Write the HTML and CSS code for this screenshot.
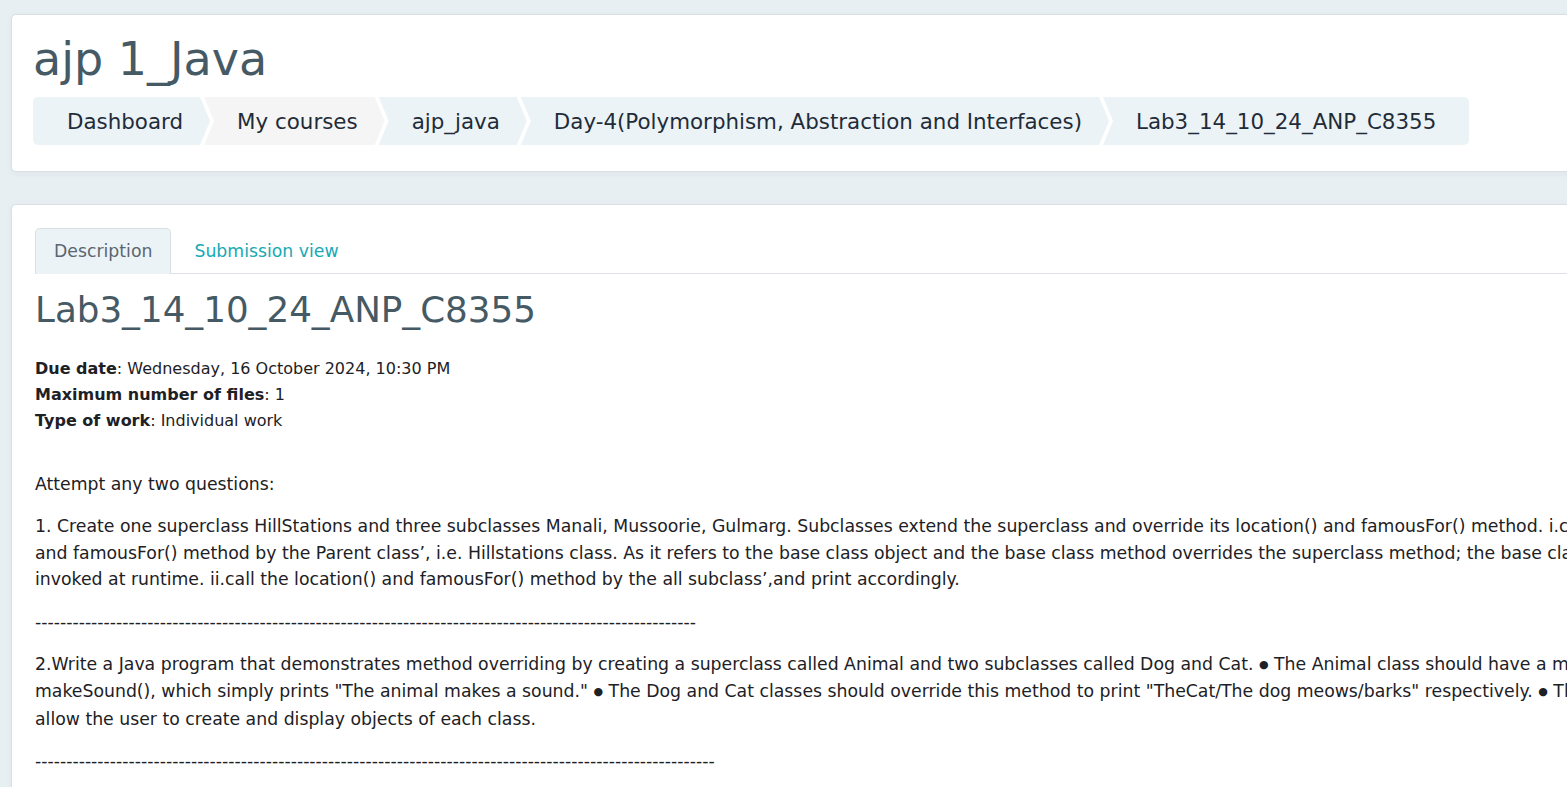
FILE: index.html
```html
<!DOCTYPE html>
<html lang="en">
<head>
<meta charset="utf-8">
<title>ajp 1_Java: Lab3_14_10_24_ANP_C8355</title>
<link rel="stylesheet" href="styles.css">
</head>
<body>
<div class="page">
  <header class="card header-card">
    <h1 class="course-title">ajp 1_Java</h1>
    <nav class="breadcrumb">
      <a class="crumb crumb-first" href="#">Dashboard</a>
      <a class="crumb crumb-hover" href="#">My courses</a>
      <a class="crumb" href="#">ajp_java</a>
      <a class="crumb" href="#">Day-4(Polymorphism, Abstraction and Interfaces)</a>
      <span class="crumb crumb-last">Lab3_14_10_24_ANP_C8355</span>
    </nav>
  </header>

  <main class="card content-card">
    <ul class="tabs">
      <li class="tab tab-active">Description</li>
      <li class="tab"><a class="tab-link" href="#">Submission view</a></li>
    </ul>
    <h2 class="activity-title">Lab3_14_10_24_ANP_C8355</h2>
    <div class="dates">
      <div><strong>Due date</strong>: Wednesday, 16 October 2024, 10:30 PM</div>
      <div><strong>Maximum number of files</strong>: 1</div>
      <div><strong>Type of work</strong>: Individual work</div>
    </div>
    <div class="intro">
      <p>Attempt any two questions:</p>
      <p class="lines">1. Create one superclass HillStations and three subclasses Manali, Mussoorie, Gulmarg. Subclasses extend the superclass and override its location() and famousFor() method. i.call the location()<br>and famousFor() method by the Parent class’, i.e. Hillstations class. As it refers to the base class object and the base class method overrides the superclass method; the base class method is<br>invoked at runtime. ii.call the location() and famousFor() method by the all subclass’,and print accordingly.</p>
      <p class="lines">----------------------------------------------------------------------------------------------------------</p>
      <p class="lines">2.Write a Java program that demonstrates method overriding by creating a superclass called Animal and two subclasses called Dog and Cat. <span class="bullet">●</span> The Animal class should have a method<br>makeSound(), which simply prints "The animal makes a sound." <span class="bullet">●</span> The Dog and Cat classes should override this method to print "TheCat/The dog meows/barks" respectively. <span class="bullet">●</span> The program should<br>allow the user to create and display objects of each class.</p>
      <p class="lines">-------------------------------------------------------------------------------------------------------------</p>
    </div>
  </main>
</div>
</body>
</html>
```
FILE: styles.css
```css
html, body {
  margin: 0;
  padding: 0;
}
body {
  background: #e8eff3;
  font-family: "DejaVu Sans", "Noto Sans", sans-serif;
  color: #1d2125;
  overflow: hidden;
  height: 787px;
}
.page {
  width: 2000px;
  padding: 14px 0 0 11px;
  display: flex;
  flex-direction: column;
  gap: 32px;
}
.card {
  background: #fff;
  border: 1px solid #dadfe3;
  border-radius: 5px;
  box-shadow: 0 2px 6px rgba(40, 60, 80, 0.05);
}
.header-card {
  padding: 17px 21px 26px 21px;
}
.course-title {
  margin: 0 0 11px 0;
  font-size: 46px;
  line-height: 54px;
  font-weight: normal;
  color: #455a64;
}
.breadcrumb {
  display: flex;
  height: 48px;
}
.crumb {
  display: flex;
  align-items: center;
  padding: 0 27px 0 33px;
  background: #ecf3f7;
  color: #1f2c39;
  font-size: 21.4px;
  text-decoration: none;
  white-space: nowrap;
  margin-left: -6px;
  clip-path: polygon(0 0, calc(100% - 10px) 0, 100% 50%, calc(100% - 10px) 100%, 0 100%, 10px 50%);
}
.crumb-first {
  margin-left: 0;
  padding-left: 34px;
  border-radius: 5px 0 0 5px;
  clip-path: polygon(0 0, calc(100% - 10px) 0, 100% 50%, calc(100% - 10px) 100%, 0 100%);
}
.crumb-hover {
  background: #f5f5f5;
}
.crumb-last {
  padding-right: 33px;
  border-radius: 0 5px 5px 0;
  clip-path: polygon(0 0, 100% 0, 100% 100%, 0 100%, 10px 50%);
}
.content-card {
  padding: 23px 23px 40px 23px;
  min-height: 700px;
}
.tabs {
  list-style: none;
  margin: 0;
  padding: 0;
  display: flex;
  gap: 5px;
  border-bottom: 1px solid #dee2e6;
}
.tab {
  height: 44px;
  display: flex;
  align-items: center;
  padding: 0 17px;
  font-size: 17.3px;
  color: #5b6670;
  border: 1px solid transparent;
  border-bottom: none;
  border-radius: 5px 5px 0 0;
  margin-bottom: -1px;
}
.tab-active {
  background: #ecf3f7;
  border-color: #dadfe3;
  padding: 0 18px 1px 18px;
}
.tab-link {
  color: #17a9b5;
  text-decoration: none;
}
.activity-title {
  margin: 15px 0 0 0;
  font-size: 35.7px;
  line-height: 42px;
  font-weight: normal;
  color: #455a64;
}
.dates {
  margin-top: 25px;
  font-size: 16px;
  line-height: 26px;
}
.dates strong {
  font-weight: bold;
}
.intro {
  margin-top: 37px;
  font-size: 17.3px;
  line-height: 26.65px;
}
.intro p {
  margin: 0 0 15.5px 0;
}
.lines {
  white-space: nowrap;
}
.bullet {
  font-size: 11px;
  vertical-align: 2px;
}
```
